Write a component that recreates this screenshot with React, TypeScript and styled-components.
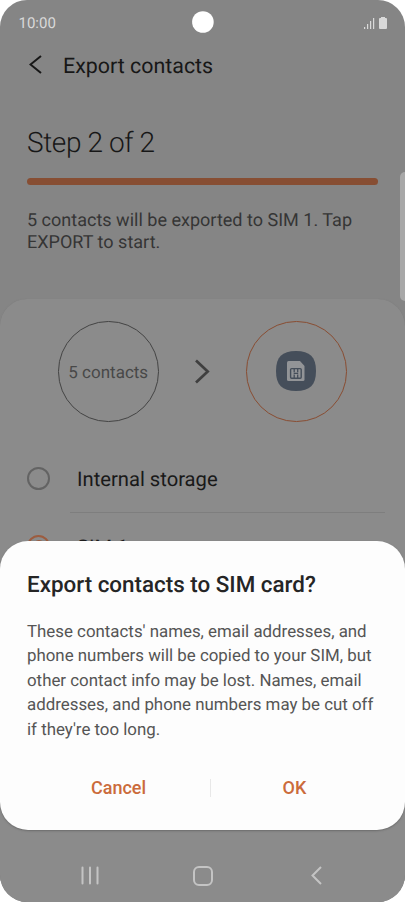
import React from 'react';
import styled, { createGlobalStyle } from 'styled-components';

const GlobalStyle = createGlobalStyle`
  * { box-sizing: border-box; }
  body { margin: 0; background: #fff; font-family: Roboto, sans-serif; text-rendering: geometricPrecision; }
  h1, h2, p { margin: 0; font-weight: 400; }
  svg { display: block; }
  button { border: 0; padding: 0; background: none; font-family: inherit; }
`;

const Phone = styled.main`
  position: relative;
  display: flex;
  flex-direction: column;
  width: 405px;
  height: 902px;
  overflow: hidden;
  border-radius: 27px;
  background: #858585;
  white-space: nowrap;
`;

const StatusBar = styled.div`
  display: grid;
  grid-template-columns: 1fr 22px 1fr;
  align-items: center;
  height: 44px;
  padding: 0 18px 0 18px;
  color: #d9d9d9;
  font-size: 15px;
`;

const Camera = styled.svg`
  width: 22px;
  height: 22px;
  fill: #fff;
`;

const Clock = styled.span`
  padding: 2px 0 0 0.5px;
`;

const StatusIcons = styled.div`
  justify-self: end;
  padding-top: 1px;
`;

const AppBar = styled.header`
  display: flex;
  align-items: center;
  gap: 21px;
  height: 44px;
  padding-left: 29px;

  svg { margin-bottom: 3px; }
`;

const AppTitle = styled.h1`
  padding-top: 2px;
  color: #171717;
  font-size: 21.4px;
  line-height: 28px;
`;

const Intro = styled.section`
  height: 211px;
  padding: 36px 27px 0;
`;

const StepTitle = styled.h2`
  color: #171717;
  font-size: 28px;
  font-weight: 300;
  line-height: 38px;
  letter-spacing: -0.4px;
`;

const Progress = styled.div`
  width: 351px;
  height: 7px;
  margin-top: 15.7px;
  border-radius: 4px;
  background: #874e33;
`;

const IntroText = styled.p`
  margin-top: 25.3px;
  color: #353535;
  font-size: 18.05px;
  line-height: 22px;
`;

const Card = styled.section`
  flex: 1;
  padding-top: 22px;
  border-radius: 27px 27px 0 0;
  background: #8b8b8b;
  box-shadow: 0 0 1px #777;
`;

const Transfer = styled.div`
  display: flex;
  align-items: center;
  padding-left: 58px;
`;

const Ring = styled.div<{ $accent?: boolean }>`
  display: flex;
  align-items: center;
  justify-content: center;
  width: 100.5px;
  height: 100.5px;
  border: 1px solid ${({ $accent }) => ($accent ? '#894d32' : '#444')};
  border-radius: 50%;
  color: #484848;
  font-size: 17px;
`;

const RingLabel = styled.span`
  padding-top: 3px;
`;

const Arrow = styled.div`
  display: flex;
  justify-content: center;
  width: 87.5px;
`;

const Option = styled.div`
  display: flex;
  align-items: center;
  gap: 27px;
  height: 68px;
  padding-left: 27px;
  color: #191919;
  font-size: 20.2px;

  &:last-child { height: 66px; }
`;

const OptionLabel = styled.span`
  padding-top: 2px;
`;

const Options = styled.div`
  padding-top: 22.5px;
`;

const Divider = styled.hr`
  height: 1px;
  margin: 0 20px 0 70px;
  border: 0;
  background: #7e7e7e;
`;

const Radio = styled.span<{ $selected?: boolean }>`
  display: flex;
  align-items: center;
  justify-content: center;
  width: 23px;
  height: 23px;
  border: 2px solid ${({ $selected }) => ($selected ? '#9c5c3f' : '#636363')};
  border-radius: 50%;

  &::after {
    content: '';
    display: ${({ $selected }) => ($selected ? 'block' : 'none')};
    width: 12px;
    height: 12px;
    border-radius: 50%;
    background: #9c5c3f;
  }
`;

const EdgeHandle = styled.div`
  position: absolute;
  top: 172px;
  right: 0;
  width: 5px;
  height: 129px;
  border-radius: 5px 0 0 5px;
  background: #a8a8a8;
`;

const Dialog = styled.section`
  position: absolute;
  inset: 541px 0 auto;
  height: 288.5px;
  padding: 28px 27px 0;
  border-radius: 28px;
  background: #fdfdfd;
  box-shadow: 0 1px 2px #6c6c6c;
`;

const DialogTitle = styled.h2`
  color: #252525;
  font-size: 22.4px;
  font-weight: 500;
  line-height: 32px;
`;

const DialogText = styled.p`
  margin-top: 19px;
  color: #555;
  font-size: 16.86px;
  line-height: 24.4px;
`;

const Actions = styled.div`
  display: grid;
  grid-template-columns: 183px 1px 1fr;
  align-items: center;
  height: 48px;
  margin-top: 22px;
`;

const Action = styled.button`
  color: #cb6b3b;
  font-size: 18px;
  font-weight: 500;
  line-height: 24px;
`;

const ActionDivider = styled.span`
  height: 18px;
  background: #e8e8e8;
`;

const NavBar = styled.nav`
  position: absolute;
  inset: auto 0 0;
  display: grid;
  grid-template-columns: 112px 118px auto;
  align-items: center;
  height: 53px;
  padding-left: 81px;
`;

const Chevron = ({ width, height, color, stroke, right }: {
  width: number; height: number; color: string; stroke: number; right?: boolean;
}) => (
  <svg width={width} height={height} fill="none" stroke={color} strokeWidth={stroke}>
    <path d={right
      ? `M2 1.5L${width - 2.3} ${height / 2}L2 ${height - 1.5}`
      : `M${width - 1} 1L1.5 ${height / 2}L${width - 1} ${height - 1}`} />
  </svg>
);

const SignalBattery = () => (
  <svg width="24" height="14" fill="#d9d9d9">
    <path d="M1 11h1.2v2H1zM4 8h1.2v5H4zM7 5h1.2v8H7zM10 2h1.2v11H10z" />
    <path d="M18 1h4v1h1q1 0 1 1v9q0 1-1 1h-6q-1 0-1-1V3q0-1 1-1h1z" />
  </svg>
);

const SimIcon = () => (
  <svg width="42" height="42" viewBox="0 0 42 42">
    <path d="M21 1C35 1 41 7 41 21S35 41 21 41 1 35 1 21 7 1 21 1Z" fill="#454e5a" />
    <path d="M13.5 11H25l4.5 5v13.5q0 1.5-1.5 1.5H13.5q-1.5 0-1.5-1.5v-17q0-1.5 1.5-1.5Z" fill="#929497" />
    <rect x="15.6" y="18.6" width="10.6" height="9.6" rx="1" fill="none" stroke="#454e5a" strokeWidth="1.4" />
    <path d="M19.2 19v3.2M22.7 19v3.2M19.2 24.5V28M22.7 24.5V28M18.7 23.3h4.5" fill="none" stroke="#454e5a" strokeWidth="1.3" />
  </svg>
);

export default function App() {
  return (
    <>
      <GlobalStyle />
      <Phone>
        <StatusBar>
          <Clock>10:00</Clock>
          <Camera><circle cx="10.9" cy="11" r="10.8" /></Camera>
          <StatusIcons><SignalBattery /></StatusIcons>
        </StatusBar>
        <AppBar>
          <Chevron width={13} height={19} color="#171717" stroke={2} />
          <AppTitle>Export contacts</AppTitle>
        </AppBar>
        <Intro>
          <StepTitle>Step 2 of 2</StepTitle>
          <Progress />
          <IntroText>5 contacts will be exported to SIM 1. Tap<br />EXPORT to start.</IntroText>
        </Intro>
        <Card>
          <Transfer>
            <Ring><RingLabel>5 contacts</RingLabel></Ring>
            <Arrow><Chevron width={16} height={25} color="#3f3f3f" stroke={2.7} right /></Arrow>
            <Ring $accent><SimIcon /></Ring>
          </Transfer>
          <Options>
            <Option><Radio /><OptionLabel>Internal storage</OptionLabel></Option>
            <Divider />
            <Option><Radio $selected /><OptionLabel>SIM 1</OptionLabel></Option>
          </Options>
        </Card>
        <EdgeHandle />
        <Dialog role="dialog" aria-modal="true">
          <DialogTitle>Export contacts to SIM card?</DialogTitle>
          <DialogText>
            These contacts' names, email addresses, and<br />
            phone numbers will be copied to your SIM, but<br />
            other contact info may be lost. Names, email<br />
            addresses, and phone numbers may be cut off<br />
            if they're too long.
          </DialogText>
          <Actions>
            <Action>Cancel</Action>
            <ActionDivider />
            <Action>OK</Action>
          </Actions>
        </Dialog>
        <NavBar>
          <svg width="18" height="19" stroke="#c4c4c4" strokeWidth="2" strokeLinecap="round">
            <path d="M1.5 1.5v16M9 1.5v16M16.5 1.5v16" />
          </svg>
          <svg width="20" height="20" fill="none" stroke="#c4c4c4" strokeWidth="2">
            <rect x="1" y="1" width="18" height="18" rx="5" />
          </svg>
          <Chevron width={11} height={19} color="#c4c4c4" stroke={2} />
        </NavBar>
      </Phone>
    </>
  );
}
